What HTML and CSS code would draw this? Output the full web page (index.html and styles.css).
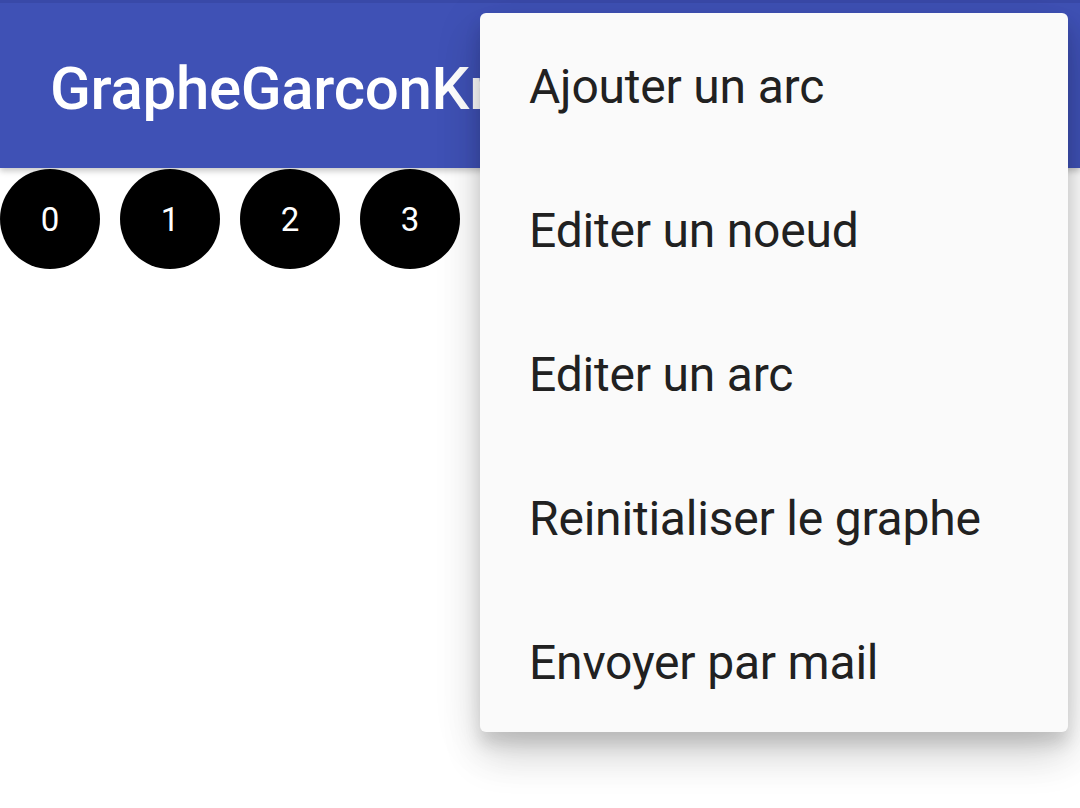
FILE: index.html
```html
<!DOCTYPE html>
<html lang="fr">
<head>
<meta charset="utf-8">
<title>GrapheGarconKr</title>
<link rel="stylesheet" href="styles.css">
</head>
<body>
<div class="screen">
  <header class="appbar">
    <h1 class="title">GrapheGarconKruskal</h1>
  </header>
  <main class="canvas">
    <div class="node">0</div>
    <div class="node">1</div>
    <div class="node">2</div>
    <div class="node">3</div>
  </main>
  <ul class="menu">
    <li class="item">Ajouter un arc</li>
    <li class="item">Editer un noeud</li>
    <li class="item">Editer un arc</li>
    <li class="item">Reinitialiser le graphe</li>
    <li class="item">Envoyer par mail</li>
  </ul>
</div>
</body>
</html>
```

FILE: styles.css
```css
html, body {
  margin: 0;
  padding: 0;
  background: #ffffff;
}
body {
  font-family: Roboto, "Noto Sans", sans-serif;
  width: 1080px;
  height: 808px;
  overflow: hidden;
}
.screen {
  position: relative;
  width: 1080px;
  height: 808px;
}
.appbar {
  height: 165px;
  border-top: 3px solid #3949a8;
  background: #3f51b5;
  display: flex;
  align-items: center;
  padding-left: 50px;
  box-shadow: 0 3px 6px rgba(0,0,0,0.22);
  position: relative;
  z-index: 1;
  overflow: hidden;
}
.title {
  margin: 0;
  color: #ffffff;
  font-size: 60px;
  font-weight: 500;
  white-space: nowrap;
  letter-spacing: -0.3px;
  margin-top: 6px;
  max-width: 430px;
  overflow: hidden;
}
.canvas {
  display: flex;
  gap: 20px;
  padding-top: 1px;
}
.node {
  width: 100px;
  height: 100px;
  border-radius: 50%;
  background: #000000;
  color: #ffffff;
  font-size: 33px;
  display: flex;
  align-items: center;
  justify-content: center;
}
.menu {
  position: absolute;
  left: 480px;
  top: 13px;
  width: 588px;
  height: 719px;
  margin: 0;
  padding: 0;
  list-style: none;
  background: #fafafa;
  border-radius: 6px;
  z-index: 2;
  box-shadow: 0 26px 40px rgba(0,0,0,0.12), 0 10px 50px rgba(0,0,0,0.10), 0 12px 16px rgba(0,0,0,0.12);
}
.item {
  height: 144px;
  display: flex;
  align-items: center;
  padding-left: 49px;
  padding-top: 3px;
  box-sizing: border-box;
  font-size: 48px;
  letter-spacing: -0.2px;
  color: #212121;
  white-space: nowrap;
}
```
